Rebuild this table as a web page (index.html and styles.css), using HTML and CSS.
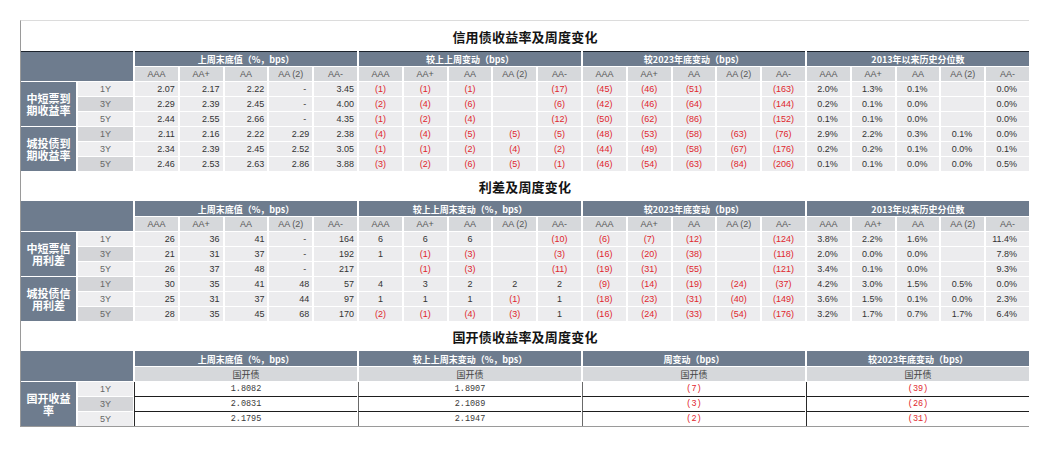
FILE: index.html
```html
<!DOCTYPE html>
<html lang="zh-CN">
<head>
<meta charset="utf-8">
<title>信用债收益率及周度变化</title>
<link rel="stylesheet" href="styles.css">
</head>
<body>
<div class="sheet">

  <div class="title">信用债收益率及周度变化</div>
  <div class="grid s1">
    <div class="corner"></div>
    <div class="hd">上周末底值（%，bps）</div>
    <div class="hd">较上上周变动（bps）</div>
    <div class="hd">较2023年底变动（bps）</div>
    <div class="hd">2013年以来历史分位数</div>
    <div class="sub">AAA</div><div class="sub">AA+</div><div class="sub">AA</div><div class="sub">AA (2)</div><div class="sub">AA-</div>
    <div class="sub">AAA</div><div class="sub">AA+</div><div class="sub">AA</div><div class="sub">AA (2)</div><div class="sub">AA-</div>
    <div class="sub">AAA</div><div class="sub">AA+</div><div class="sub">AA</div><div class="sub">AA (2)</div><div class="sub">AA-</div>
    <div class="sub">AAA</div><div class="sub">AA+</div><div class="sub">AA</div><div class="sub">AA (2)</div><div class="sub">AA-</div>

    <div class="lab">中短票到期收益率</div>
    <div class="t">1Y</div>
    <div class="v r">2.07</div><div class="v r">2.17</div><div class="v r">2.22</div><div class="v r d">-</div><div class="v r">3.45</div>
    <div class="v m n">(1)</div><div class="v m n">(1)</div><div class="v m n">(1)</div><div class="v"></div><div class="v m n">(17)</div>
    <div class="v m n">(45)</div><div class="v m n">(46)</div><div class="v m n">(51)</div><div class="v"></div><div class="v m n">(163)</div>
    <div class="v p">2.0%</div><div class="v p">1.3%</div><div class="v p">0.1%</div><div class="v"></div><div class="v p">0.0%</div>

    <div class="t dk">3Y</div>
    <div class="v r">2.29</div><div class="v r">2.39</div><div class="v r">2.45</div><div class="v r d">-</div><div class="v r">4.00</div>
    <div class="v m n">(2)</div><div class="v m n">(4)</div><div class="v m n">(6)</div><div class="v"></div><div class="v m n">(6)</div>
    <div class="v m n">(42)</div><div class="v m n">(46)</div><div class="v m n">(64)</div><div class="v"></div><div class="v m n">(144)</div>
    <div class="v p">0.2%</div><div class="v p">0.1%</div><div class="v p">0.0%</div><div class="v"></div><div class="v p">0.0%</div>

    <div class="t">5Y</div>
    <div class="v r">2.44</div><div class="v r">2.55</div><div class="v r">2.66</div><div class="v r d">-</div><div class="v r">4.35</div>
    <div class="v m n">(1)</div><div class="v m n">(2)</div><div class="v m n">(4)</div><div class="v"></div><div class="v m n">(12)</div>
    <div class="v m n">(50)</div><div class="v m n">(62)</div><div class="v m n">(86)</div><div class="v"></div><div class="v m n">(152)</div>
    <div class="v p">0.1%</div><div class="v p">0.1%</div><div class="v p">0.0%</div><div class="v"></div><div class="v p">0.0%</div>

    <div class="lab">城投债到期收益率</div>
    <div class="t dk">1Y</div>
    <div class="v r">2.11</div><div class="v r">2.16</div><div class="v r">2.22</div><div class="v r">2.29</div><div class="v r">2.38</div>
    <div class="v m n">(4)</div><div class="v m n">(4)</div><div class="v m n">(5)</div><div class="v m n">(5)</div><div class="v m n">(5)</div>
    <div class="v m n">(48)</div><div class="v m n">(53)</div><div class="v m n">(58)</div><div class="v m n">(63)</div><div class="v m n">(76)</div>
    <div class="v p">2.9%</div><div class="v p">2.2%</div><div class="v p">0.3%</div><div class="v p">0.1%</div><div class="v p">0.0%</div>

    <div class="t">3Y</div>
    <div class="v r">2.34</div><div class="v r">2.39</div><div class="v r">2.45</div><div class="v r">2.52</div><div class="v r">3.05</div>
    <div class="v m n">(1)</div><div class="v m n">(1)</div><div class="v m n">(2)</div><div class="v m n">(4)</div><div class="v m n">(2)</div>
    <div class="v m n">(44)</div><div class="v m n">(49)</div><div class="v m n">(58)</div><div class="v m n">(67)</div><div class="v m n">(176)</div>
    <div class="v p">0.2%</div><div class="v p">0.2%</div><div class="v p">0.1%</div><div class="v p">0.0%</div><div class="v p">0.1%</div>

    <div class="t dk">5Y</div>
    <div class="v r">2.46</div><div class="v r">2.53</div><div class="v r">2.63</div><div class="v r">2.86</div><div class="v r">3.88</div>
    <div class="v m n">(3)</div><div class="v m n">(2)</div><div class="v m n">(6)</div><div class="v m n">(5)</div><div class="v m n">(1)</div>
    <div class="v m n">(46)</div><div class="v m n">(54)</div><div class="v m n">(63)</div><div class="v m n">(84)</div><div class="v m n">(206)</div>
    <div class="v p">0.1%</div><div class="v p">0.1%</div><div class="v p">0.0%</div><div class="v p">0.0%</div><div class="v p">0.5%</div>
  </div>

  <div class="title">利差及周度变化</div>
  <div class="grid s2">
    <div class="corner"></div>
    <div class="hd">上周末底值（%，bps）</div>
    <div class="hd">较上上周末变动（%，bps）</div>
    <div class="hd">较2023年底变动（bps）</div>
    <div class="hd">2013年以来历史分位数</div>
    <div class="sub">AAA</div><div class="sub">AA+</div><div class="sub">AA</div><div class="sub">AA (2)</div><div class="sub">AA-</div>
    <div class="sub">AAA</div><div class="sub">AA+</div><div class="sub">AA</div><div class="sub">AA (2)</div><div class="sub">AA-</div>
    <div class="sub">AAA</div><div class="sub">AA+</div><div class="sub">AA</div><div class="sub">AA (2)</div><div class="sub">AA-</div>
    <div class="sub">AAA</div><div class="sub">AA+</div><div class="sub">AA</div><div class="sub">AA (2)</div><div class="sub">AA-</div>

    <div class="lab">中短票信用利差</div>
    <div class="t">1Y</div>
    <div class="v r">26</div><div class="v r">36</div><div class="v r">41</div><div class="v r d">-</div><div class="v r">164</div>
    <div class="v m">6</div><div class="v m">6</div><div class="v m">6</div><div class="v"></div><div class="v m n">(10)</div>
    <div class="v m n">(6)</div><div class="v m n">(7)</div><div class="v m n">(12)</div><div class="v"></div><div class="v m n">(124)</div>
    <div class="v p">3.8%</div><div class="v p">2.2%</div><div class="v p">1.6%</div><div class="v"></div><div class="v p">11.4%</div>

    <div class="t dk">3Y</div>
    <div class="v r">21</div><div class="v r">31</div><div class="v r">37</div><div class="v r d">-</div><div class="v r">192</div>
    <div class="v m">1</div><div class="v m n">(1)</div><div class="v m n">(3)</div><div class="v"></div><div class="v m n">(3)</div>
    <div class="v m n">(16)</div><div class="v m n">(20)</div><div class="v m n">(38)</div><div class="v"></div><div class="v m n">(118)</div>
    <div class="v p">2.0%</div><div class="v p">0.0%</div><div class="v p">0.0%</div><div class="v"></div><div class="v p">7.8%</div>

    <div class="t">5Y</div>
    <div class="v r">26</div><div class="v r">37</div><div class="v r">48</div><div class="v r d">-</div><div class="v r">217</div>
    <div class="v"></div><div class="v m n">(1)</div><div class="v m n">(3)</div><div class="v"></div><div class="v m n">(11)</div>
    <div class="v m n">(19)</div><div class="v m n">(31)</div><div class="v m n">(55)</div><div class="v"></div><div class="v m n">(121)</div>
    <div class="v p">3.4%</div><div class="v p">0.1%</div><div class="v p">0.0%</div><div class="v"></div><div class="v p">9.3%</div>

    <div class="lab">城投债信用利差</div>
    <div class="t dk">1Y</div>
    <div class="v r">30</div><div class="v r">35</div><div class="v r">41</div><div class="v r">48</div><div class="v r">57</div>
    <div class="v m">4</div><div class="v m">3</div><div class="v m">2</div><div class="v m">2</div><div class="v m">2</div>
    <div class="v m n">(9)</div><div class="v m n">(14)</div><div class="v m n">(19)</div><div class="v m n">(24)</div><div class="v m n">(37)</div>
    <div class="v p">4.2%</div><div class="v p">3.0%</div><div class="v p">1.5%</div><div class="v p">0.5%</div><div class="v p">0.0%</div>

    <div class="t">3Y</div>
    <div class="v r">25</div><div class="v r">31</div><div class="v r">37</div><div class="v r">44</div><div class="v r">97</div>
    <div class="v m">1</div><div class="v m">1</div><div class="v m">1</div><div class="v m n">(1)</div><div class="v m">1</div>
    <div class="v m n">(18)</div><div class="v m n">(23)</div><div class="v m n">(31)</div><div class="v m n">(40)</div><div class="v m n">(149)</div>
    <div class="v p">3.6%</div><div class="v p">1.5%</div><div class="v p">0.1%</div><div class="v p">0.0%</div><div class="v p">2.3%</div>

    <div class="t dk">5Y</div>
    <div class="v r">28</div><div class="v r">35</div><div class="v r">45</div><div class="v r">68</div><div class="v r">170</div>
    <div class="v m n">(2)</div><div class="v m n">(1)</div><div class="v m n">(4)</div><div class="v m n">(3)</div><div class="v m">1</div>
    <div class="v m n">(16)</div><div class="v m n">(24)</div><div class="v m n">(33)</div><div class="v m n">(54)</div><div class="v m n">(176)</div>
    <div class="v p">3.2%</div><div class="v p">1.7%</div><div class="v p">0.7%</div><div class="v p">1.7%</div><div class="v p">6.4%</div>
  </div>

  <div class="title">国开债收益率及周度变化</div>
  <div class="grid s3">
    <div class="corner"></div>
    <div class="hd">上周末底值（%，bps）</div>
    <div class="hd">较上上周末变动（%，bps）</div>
    <div class="hd">周变动（bps）</div>
    <div class="hd">较2023年底变动（bps）</div>
    <div class="sub wide">国开债</div><div class="sub wide">国开债</div><div class="sub wide">国开债</div><div class="sub wide">国开债</div>

    <div class="lab">国开收益率</div>
    <div class="t">1Y</div>
    <div class="w">1.8082</div><div class="w g">1.8907</div><div class="w g n">(7)</div><div class="w n">(39)</div>
    <div class="t dk">3Y</div>
    <div class="w">2.0831</div><div class="w g">2.1089</div><div class="w g n">(3)</div><div class="w n">(26)</div>
    <div class="t">5Y</div>
    <div class="w last">2.1795</div><div class="w g last">2.1947</div><div class="w g n last">(2)</div><div class="w n last">(31)</div>
  </div>

</div>
</body>
</html>
```

FILE: styles.css
```css
html, body {
  margin: 0;
  padding: 0;
  background: #ffffff;
}

body {
  font-family: "Liberation Sans", Arial, "Noto Sans CJK SC", sans-serif;
  color: #333333;
}

.sheet {
  box-sizing: border-box;
  width: 1009px;
  margin: 20px 0 0 20px;
  border-top: 1px solid #dcdcdc;
  border-left: 1px solid #9a9a9a;
  border-bottom: 1px solid #9a9a9a;
}

.title {
  height: 30px;
  display: flex;
  align-items: center;
  justify-content: center;
  font-family: "Noto Sans CJK SC", sans-serif;
  font-weight: 700;
  font-size: 13px;
  color: #141414;
  letter-spacing: 0.2px;
}

.grid {
  display: grid;
  grid-template-columns: 55px 55px repeat(20, 1fr);
  grid-template-rows: 15px 14px;
  grid-auto-rows: 14px;
  column-gap: 2px;
  row-gap: 1px;
}

.grid > div {
  display: flex;
  align-items: center;
  font-size: 9px;
  line-height: 1;
  white-space: nowrap;
  overflow: hidden;
}

.corner {
  grid-column: 1 / 3;
  grid-row: 1 / 3;
  background: #6e7c8e;
  border-top: 1px solid #6e7c8e;
}

.hd {
  grid-column: span 5;
  justify-content: center;
  background: #6e7c8e;
  border-top: 1px solid #6e7c8e;
  color: #ffffff;
  font-family: "Noto Sans CJK SC", sans-serif;
  font-weight: 700;
}

.s1 .hd,
.s1 .corner {
  border-top-color: #1c232c;
}

.sub {
  justify-content: center;
  background: #d6d8db;
  color: #575757;
}

.sub.wide {
  grid-column: span 5;
  font-family: "Noto Sans CJK SC", sans-serif;
  color: #444444;
}

.grid > .lab {
  grid-row: span 3;
  justify-content: center;
  text-align: center;
  box-sizing: border-box;
  padding: 0 5px;
  background: #6e7c8e;
  color: #ffffff;
  font-family: "Noto Sans CJK SC", sans-serif;
  font-weight: 700;
  font-size: 11px;
  line-height: 12px;
  white-space: normal;
}

.t {
  justify-content: center;
  background: #eeeef0;
  color: #666666;
}

.t.dk {
  background: #d4d5d8;
}

.v {
  background: #ececee;
  color: #333333;
}

.r {
  justify-content: flex-end;
  padding-right: 3px;
}

.r.d {
  padding-right: 6px;
}

.m {
  justify-content: center;
}

.p {
  justify-content: flex-end;
  padding-right: 12px;
}

.n {
  color: #e0262d;
}

.grid > .w {
  grid-column: span 5;
  justify-content: center;
  background: #ffffff;
  font-family: "Liberation Mono", monospace;
  font-size: 8.5px;
  color: #3a3a3a;
  border-left: 1px solid #2a2a2a;
  border-bottom: 1px solid #1e1e1e;
  margin-bottom: -1px;
  margin-left: -1px;
}

.grid > .w.g {
  border-left-color: #6a6a6a;
}

.grid > .w.n {
  color: #e0262d;
}

.grid > .w.last {
  border-bottom: none;
  margin-bottom: 0;
}
```
